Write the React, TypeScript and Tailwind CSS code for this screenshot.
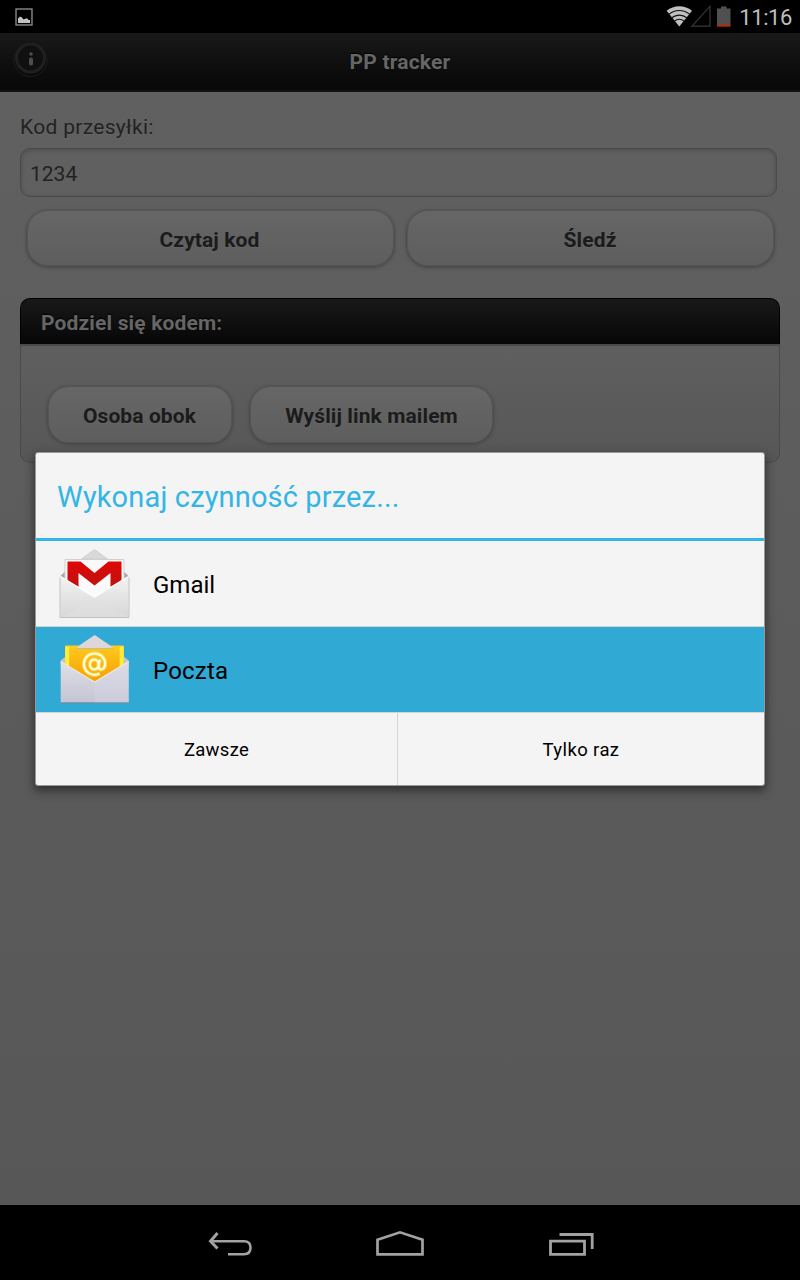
import type { ReactNode } from "react";

function StatusBar() {
  return (
    <div className="flex h-[33px] shrink-0 items-center bg-black pl-[15px] pr-2">
      <svg width="18" height="18" viewBox="0 0 18 18" className="mt-px">
        <rect x="1" y="1" width="16" height="16" fill="none" stroke="#929292" strokeWidth="1.3" />
        <path d="M3 15V10.500L4 9.500L5 8.500L7 9.500L8.500 11.500L11 10.500L12.500 10.500L13.500 12H15V15Z" fill="#c2c2c2" />
      </svg>
      <svg width="66" height="24" viewBox="0 0 66 24" className="ml-auto -mt-px">
        <path d="M13.300 22.400L0.600 6.800A20 20 0 0 1 26 6.800Z" fill="#c0c0c0" />
        <g fill="none" stroke="#101010" strokeWidth="1.100">
          <path d="M2.800 10.400A16 16 0 0 1 23.800 10.400" />
          <path d="M5.800 13.800A12 12 0 0 1 20.800 13.800" />
          <path d="M8.500 17A8 8 0 0 1 18.100 17" />
        </g>
        <path d="M26 22.200H44V2.200Z" fill="none" stroke="#383838" strokeWidth="1.200" />
        <path d="M51 4.500H55V2.500H60.500V4.500H64.500V21H51Z" fill="#505050" />
        <path d="M51 20.700H64.500V22.700H51Z" fill="#c22900" />
      </svg>
      <span className="ml-[7px] mt-[3px] text-[22px] leading-6 tracking-[-0.4px] text-[#bebebe]">11:16</span>
    </div>
  );
}

function Pill({ children, className }: { children: ReactNode; className: string }) {
  return (
    <button
      className={
        "flex items-center justify-center rounded-[21px] border border-[#545454] bg-linear-to-b from-[#666] to-[#5e5e5e] text-[21px] font-bold tracking-[0.1px] text-[#1b1b1b] shadow-[0_1px_3px_1px_#484848] [text-shadow:0_1px_0_#666] " +
        className
      }
    >
      {children}
    </button>
  );
}

function GmailIcon() {
  return (
    <svg width="72" height="74" viewBox="0 0 72 74">
      <defs>
        <linearGradient id="gm-body" x2="0" y2="1">
          <stop stopColor="#f2f2f2" />
          <stop offset="1" stopColor="#d7d7d7" />
        </linearGradient>
        <linearGradient id="gm-red" x2="0" y2="1">
          <stop stopColor="#e00808" />
          <stop offset="1" stopColor="#b9130e" />
        </linearGradient>
      </defs>
      <g transform="translate(-0.5 1)">
        <path d="M23 11L36 1.500L49 11Z" fill="#d9d9d9" stroke="#c9c9c9" strokeWidth=".8" />
        <path d="M2 28L7 23V34L2 31ZM70 28L65 23V36L70 31Z" fill="#a9a9a9" />
        <path d="M6.500 11.500H65.500V34L36 52L6.500 34Z" fill="#fafafa" stroke="#d0d0d0" />
        <path d="M9 13.500H22L36 25L50 13.500H63V36L52 43V25L36 37.500L20 25V43L9 36Z" fill="url(#gm-red)" />
        <path d="M2 28.500L36 49L70 28.500V69H2Z" fill="url(#gm-body)" />
        <path d="M2 69L36 51L70 69Z" fill="#e2e2e2" opacity=".5" />
        <path d="M2 28.500L36 49L70 28.500" fill="none" stroke="#fff" strokeWidth="1.400" />
        <path d="M1.500 30V69.500H70.500V30" fill="none" stroke="#c2c2c2" />
      </g>
    </svg>
  );
}

function MailIcon() {
  return (
    <svg width="72" height="74" viewBox="0 0 72 74">
      <defs>
        <linearGradient id="pm-body" x2="0" y2="1">
          <stop stopColor="#e0e0e7" />
          <stop offset="1" stopColor="#c4c4d4" />
        </linearGradient>
        <linearGradient id="pm-card" x2="0" y2="1">
          <stop stopColor="#ffc51c" />
          <stop offset="1" stopColor="#f49a00" />
        </linearGradient>
      </defs>
      <g transform="translate(-0.3 0.5)">
        <path d="M16 15L36 1.500L56 15Z" fill="#ddd6dc" />
        <path d="M2 27L7 23V36L2 32ZM70 27L65 23V36L70 32Z" fill="#c5c5cf" />
        <path d="M6.500 12H21L16 16H6.500ZM51 12H65V16H56Z" fill="#ffc91f" />
        <path d="M6.500 15H65V34L36 53L6.500 34Z" fill="url(#pm-card)" />
        <path d="M6.500 13H10.500V36L6.500 33ZM61 13H65V33L61 36Z" fill="#ffef3b" />
        <path d="M2 28L36 48.500L70 28V69H2Z" fill="url(#pm-body)" />
        <path d="M36 48.500L70 28V69H36Z" fill="#d7d8e5" opacity=".4" />
        <path d="M2 28L36 48.500L70 28" fill="none" stroke="#eee7dc" strokeWidth="1.300" />
        <path d="M2 69.500H70" stroke="#77899e" />
        <g fill="none" stroke="#ffed62" strokeWidth="4.200" opacity=".55">
          <ellipse cx="35.500" cy="31" rx="4.300" ry="5" />
          <path d="M41 26L40 34Q40 36 42.500 36Q46.500 35 46.500 29.500A10.700 10.700 0 1 0 41 40" />
        </g>
        <g fill="none" stroke="#fffde6" strokeWidth="2">
          <ellipse cx="35.500" cy="31" rx="4.300" ry="5" />
          <path d="M41 26L40 34Q40 36 42.500 36Q46.500 35 46.500 29.500A10.700 10.700 0 1 0 41 40" />
        </g>
      </g>
    </svg>
  );
}

function NavBar() {
  return (
    <nav className="flex h-[75px] shrink-0 items-center bg-black pl-[207px] text-[#a2a2a2]">
      <svg width="46" height="28" viewBox="0 0 46 28" className="mt-[3px]" fill="none" stroke="currentColor" strokeWidth="2.600">
        <path d="M3 11.200H37Q43.500 11.200 43.500 17.500Q43.500 24.200 37 24.200H21" />
        <path d="M10.500 3L3.500 11.200L10.500 18.500" strokeWidth="3" />
      </svg>
      <svg width="50" height="28" viewBox="0 0 50 28" className="ml-[122px] mt-[3px]" fill="none" stroke="currentColor" strokeWidth="2.700">
        <path d="M2.500 9.800L25 2.300L47.500 9.800V24.300H2.500Z" />
      </svg>
      <svg width="46" height="28" viewBox="0 0 46 28" className="ml-[123px] mt-[3px]" fill="none" stroke="currentColor" strokeWidth="2.800">
        <path d="M2.500 11.200H36.500V24.400H2.500Z" />
        <path d="M11.500 4.500H44.200V19" />
      </svg>
    </nav>
  );
}

function ActionDialog() {
  return (
    <div role="dialog" className="absolute left-[35px] top-[452px] flex h-[334px] w-[730px] flex-col rounded-[3px] border border-[#989898] bg-[#f4f4f4] shadow-[0_4px_10px_1px_#303030]">
      <h2 className="flex h-[88px] shrink-0 items-center border-b-[3px] border-[#33b5e5] pl-[21px] pt-[5px] text-[29px] tracking-[0.15px] text-[#33b5e5]">
        Wykonaj czynność przez...
      </h2>
      <div className="flex h-[86px] shrink-0 items-center border-b border-[#d4d4d4] pl-[22.500px] text-2xl text-black">
        <GmailIcon />
        <span className="ml-[22.500px] mt-[2px]">Gmail</span>
      </div>
      <div className="flex h-[85px] shrink-0 items-center bg-[#30a9d5] pl-[22.500px] text-2xl text-black">
        <MailIcon />
        <span className="ml-[22.500px] mt-[2px] tracking-[0.2px]">Poczta</span>
      </div>
      <div className="flex min-h-0 flex-1 border-t border-[#d4d4d4] text-[18.500px] text-black">
        <button className="w-[362px] border-r border-[#d4d4d4] pt-[3px] tracking-[0.3px]">Zawsze</button>
        <button className="flex-1 pt-[3px] tracking-[0.4px]">Tylko raz</button>
      </div>
    </div>
  );
}

export default function App() {
  return (
    <div className="relative flex h-[1280px] w-[800px] flex-col overflow-hidden bg-black font-['Roboto',sans-serif]">
      <StatusBar />
      <header className="grid h-[59px] shrink-0 grid-cols-[60px_1fr_60px] items-center border-b-2 border-[#111] bg-linear-to-b from-[#191919] to-[#070707]">
        <svg width="36" height="36" viewBox="0 0 36 36" className="ml-[13px] -mt-[3px]">
          <circle cx="17.500" cy="18" r="16.500" fill="#0c0c0c" stroke="#1e1e1e" />
          <circle cx="17.500" cy="16" r="14" fill="#101010" stroke="#202020" strokeWidth="3" />
          <circle cx="18" cy="12" r="1.800" fill="#4e4e4e" />
          <rect x="16" y="15.500" width="4" height="8" rx="1.800" fill="#4e4e4e" />
        </svg>
        <h1 className="pt-[2px] text-center text-[21px] font-bold tracking-[0.200px] text-[#666] [text-shadow:0_-1px_1px_#000]">PP tracker</h1>
      </header>
      <main className="flex flex-1 flex-col bg-linear-to-b from-[#606060] to-[#575757] px-5 pt-[22px]">
        <label className="h-[34px] text-[21px] leading-[26px] tracking-[0.300px] text-[#222] [text-shadow:0_1px_0_#666]">Kod przesyłki:</label>
        <div className="flex h-[49px] w-[757px] items-center rounded-[10px] border border-[#4a4a4a] bg-[#606060] pl-[9px] pt-[4px] text-[21px] text-[#222] shadow-[inset_0_1px_4px_#4a4a4a]">
          1234
        </div>
        <div className="mt-[13px] flex gap-[13px] pl-[7px]">
          <Pill className="h-[56px] w-[367px] pt-[5px] pr-[2px]">Czytaj kod</Pill>
          <Pill className="h-[56px] w-[367px] pt-[5px] pr-px">Śledź</Pill>
        </div>
        <section className="mt-[32px] flex h-[165px] flex-col">
          <h2 className="flex h-[46px] shrink-0 items-center rounded-t-[10px] border border-b-0 border-black bg-linear-to-b from-[#191919] to-[#070707] pl-5 pt-1 text-[21px] font-bold tracking-[0.150px] text-[#666] [text-shadow:0_-1px_1px_#000]">
            Podziel się kodem:
          </h2>
          <div className="flex flex-1 items-start gap-[18px] rounded-b-[10px] border border-t-2 border-[#4a4a4a] bg-linear-to-b from-[#5f5f5f] to-[#575757] pl-[27px] pt-[40px]">
            <Pill className="h-[57px] w-[184px] pt-[4px] pr-px">Osoba obok</Pill>
            <Pill className="h-[57px] w-[243px] pt-[4px]">Wyślij link mailem</Pill>
          </div>
        </section>
      </main>
      <NavBar />
      <ActionDialog />
    </div>
  );
}
